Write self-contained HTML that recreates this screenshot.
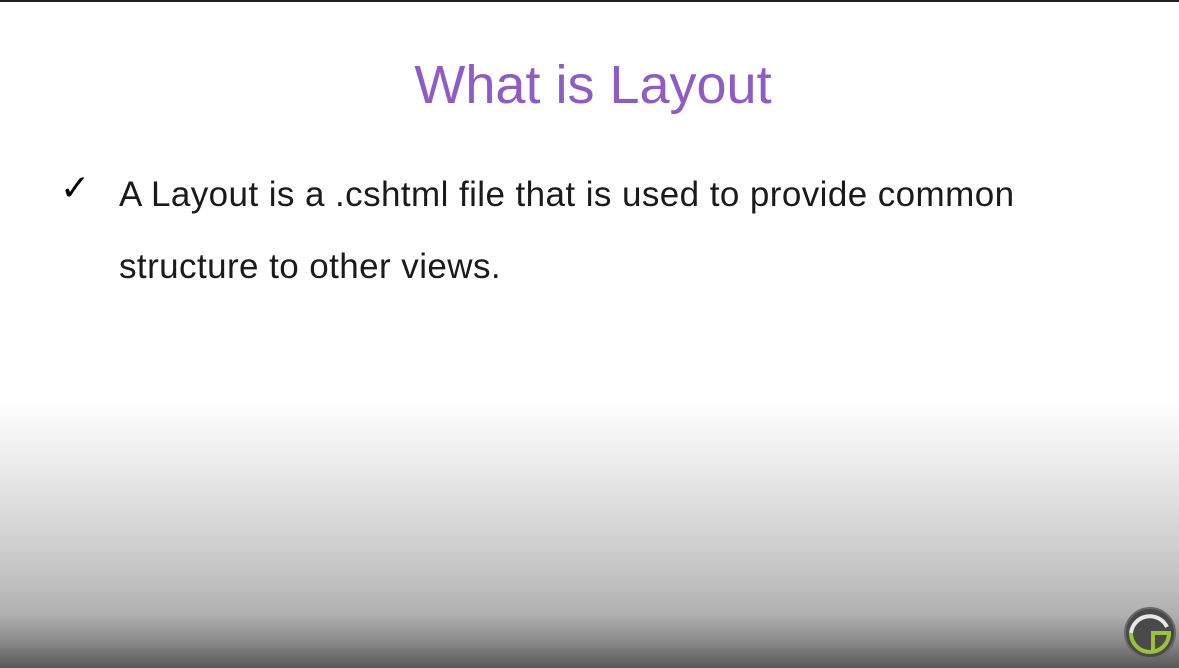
<!DOCTYPE html>
<html><head><style>
html,body{margin:0;padding:0}
body{width:1179px;height:668px;position:relative;overflow:hidden;background:#fff;font-family:"Liberation Sans","DejaVu Sans",sans-serif}
.top{position:absolute;left:0;top:0;width:1179px;height:2px;background:#222}
.grad{position:absolute;left:0;top:400px;width:1179px;height:268px;background:linear-gradient(#fff 0%,#e2e2e2 35%,#c4c4c4 65%,#b0b0b0 80%,#8a8a8a 90%,#585858 100%)}
h1{position:absolute;left:0;width:1186px;top:54px;margin:0;text-align:center;font-weight:normal;font-size:54px;color:#8e5cc6}
.chk{position:absolute;left:60px;top:168px;font-size:36px;font-weight:bold;color:#000;font-family:"DejaVu Sans",sans-serif}
.t{position:absolute;left:119px;font-size:35px;color:#1a1a1a;letter-spacing:0.42px;white-space:nowrap}
</style></head><body>
<div class="top"></div>
<div class="grad"></div>
<h1>What is Layout</h1>
<div class="chk">✓</div>
<div class="t" style="top:175px">A Layout is a .cshtml file that is used to provide common</div>
<div class="t" style="top:247px">structure to other views.</div>
<svg style="position:absolute;left:1123px;top:606px" width="54" height="54" viewBox="0 0 54 54">
<circle cx="27" cy="27" r="25" fill="#4a4a4a" stroke="#6a6a6a" stroke-width="2"/>
<path d="M8 27 A19 19 0 0 1 44 21" fill="none" stroke="#e8e8e8" stroke-width="4"/>
<path d="M8 27 A19 19 0 0 0 46 27 L30 27 L30 44" fill="none" stroke="#9dc23a" stroke-width="4"/>
</svg>
</body></html>
